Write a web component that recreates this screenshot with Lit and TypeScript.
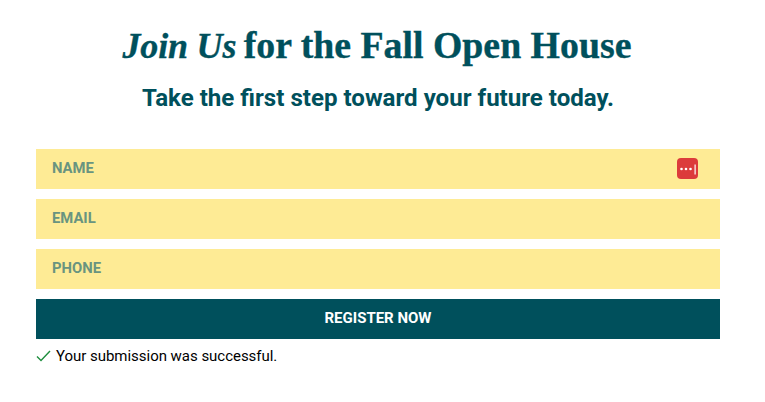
import { LitElement, html, css } from "lit";
import { customElement } from "lit/decorators.js";

@customElement("app-root")
export class AppRoot extends LitElement {
  static styles = css`
    :host { display: block; width: 765px; height: 402px; background: #fff; overflow: hidden; font-family: Roboto, sans-serif; }
    .wrap { display: flex; flex-direction: column; padding: 0 45px 0 36px; }
    h1 { margin: 22px 0 0; padding-right: 2px; height: 46px; line-height: 46px; text-align: center; font-family: "Liberation Serif", serif; font-weight: 700; font-size: 37.8px; color: #00505c; white-space: nowrap; -webkit-text-stroke: 0.35px #00505c; }
    h1 em { font-style: italic; font-size: 36px; letter-spacing: -0.2px; margin-right: -2px; }
    h2 { margin: 12px 0 0; height: 36px; line-height: 36px; text-align: center; font-weight: 700; font-size: 24.1px; color: #00505c; white-space: nowrap; }
    form { display: flex; flex-direction: column; gap: 10px; margin-top: 33px; }
    .field { position: relative; display: flex; }
    input { flex: 1; min-width: 0; height: 40px; box-sizing: border-box; border: 0; outline: 0; padding: 0 16px 2px; background: #feeb95; font: 700 14.8px Roboto, sans-serif; color: #00505c; }
    input::placeholder { color: #699480; opacity: 1; }
    .pm { position: absolute; right: 22px; top: 9px; width: 21px; height: 21px; }
    button { height: 40px; border: 0; padding: 0 0 2px; background: #00505c; color: #fff; font: 700 15px Roboto, sans-serif; }
    .ok { display: flex; align-items: center; gap: 5px; margin-top: 7px; height: 20px; font-size: 15px; line-height: 20px; color: #000; letter-spacing: -0.03px; }
    .ok svg { width: 15px; height: 15px; flex: none; }
  `;

  render() {
    return html`
      <div class="wrap">
        <h1><em>Join Us</em> for the Fall Open House</h1>
        <h2>Take the first step toward your future today.</h2>
        <form @submit=${(e: Event) => e.preventDefault()}>
          <div class="field">
            <input placeholder="NAME" aria-label="Name" />
            <svg class="pm" viewBox="0 0 21 21" aria-hidden="true">
              <rect width="21" height="21" rx="4" fill="#dc3b3b" />
              <circle cx="4.500" cy="11" r="1.300" fill="#fff" />
              <circle cx="9" cy="11" r="1.300" fill="#fff" />
              <circle cx="13.500" cy="11" r="1.300" fill="#fff" />
              <rect x="17.500" y="6.500" width="1.200" height="10" fill="#fff" />
            </svg>
          </div>
          <div class="field"><input placeholder="EMAIL" aria-label="Email" /></div>
          <div class="field"><input placeholder="PHONE" aria-label="Phone" /></div>
          <button type="submit">REGISTER NOW</button>
        </form>
        <div class="ok">
          <svg viewBox="0 0 15 15" aria-hidden="true"><path d="M1 7.500l4 4 9-9.500" fill="none" stroke="#1e8e3e" stroke-width="1.400" /></svg>
          <span>Your submission was successful.</span>
        </div>
      </div>
    `;
  }
}
